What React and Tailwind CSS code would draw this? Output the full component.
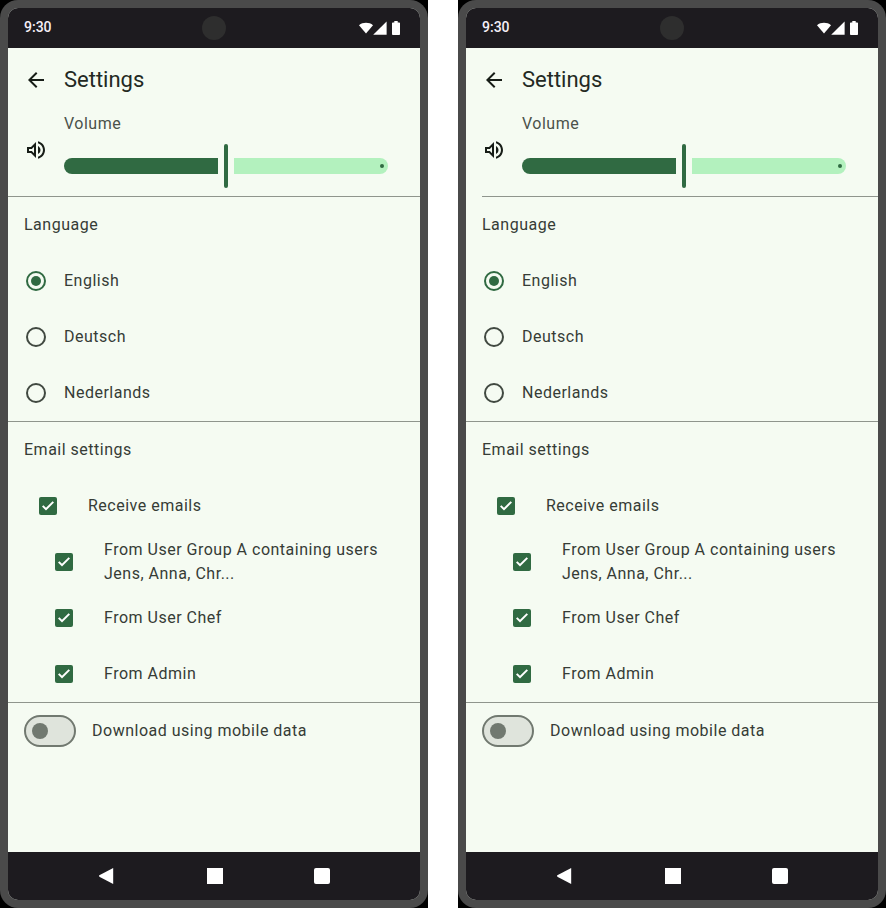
function StatusBar() {
  return (
    <div className="grid h-10 grid-cols-3 items-center bg-[#1d1b1f] pl-4 pr-5">
      <span className="pb-0.5 text-sm font-medium leading-5 tracking-normal text-[#f5eff7]">9:30</span>
      <span className="ml-[52.66px] h-6 w-6 rounded-full bg-[#2e2e2e]" />
      <svg className="h-[14px] w-[42px] justify-self-end" viewBox="0 0 42 14" fill="#fff">
        <path d="M8 12.4 1 4.2C3 2.6 5.4 1.8 8 1.8s5 .8 7 2.4z" />
        <path d="M15.2 13.7 28.6.5v13.2z" />
        <path d="M34.8 1.4H36.300V0h3.4v1.400h1.300c.6 0 1 .4 1 1V13c0 .6-.4 1-1 1h-6.200c-.5 0-.8-.4-.8-1V2.400c0-.6.3-1 .8-1z" />
      </svg>
    </div>
  );
}

function Slider() {
  return (
    <div className="flex h-11 w-[324px] items-center gap-1.5">
      <div className="h-4 w-[154px] rounded-l-full rounded-r-[1px] bg-[#306a42]" />
      <div className="h-11 w-1 rounded-full bg-[#306a42]" />
      <div className="flex h-4 w-[154px] items-center justify-end rounded-l-[1px] rounded-r-full bg-[#b3f1be] pr-1">
        <span className="h-1 w-1 rounded-full bg-[#306a42]" />
      </div>
    </div>
  );
}

function RadioRow({ label, checked }) {
  return (
    <div className="flex h-14 items-center pl-[18px]">
      <span
        className={
          checked
            ? "flex h-5 w-5 items-center justify-center rounded-full border-2 border-[#306a42]"
            : "h-5 w-5 rounded-full border-2 border-[#414941]"
        }
      >
        {checked && <span className="h-2.5 w-2.5 rounded-full bg-[#306a42]" />}
      </span>
      <span className="ml-[18px] pb-px">{label}</span>
    </div>
  );
}

function CheckRow({ label, nested }) {
  return (
    <div className={nested ? "flex h-14 items-center pl-[47px]" : "flex h-14 items-center pl-[31px]"}>
      <span className="flex h-[18px] w-[18px] shrink-0 items-center justify-center rounded-xs bg-[#306a42]">
        <svg className="h-[18px] w-[18px]" viewBox="0 0 18 18" fill="#fff">
          <path d="M7 13.6 3 9.600l1.400-1.400L7 10.800l6.600-6.600 1.400 1.400z" />
        </svg>
      </span>
      <span className="ml-[31px] w-[290px] pb-px">{label}</span>
    </div>
  );
}

function SectionTitle({ children }) {
  return <div className="flex h-14 items-center pb-px pl-4">{children}</div>;
}

function Divider({ inset }) {
  return <div className={inset ? "ml-4 h-px bg-[#8f958d]" : "h-px bg-[#8f958d]"} />;
}

function NavBar() {
  return (
    <div className="flex h-12 items-center bg-[#1d1b1f] pl-[91px]">
      <svg className="h-4 w-[15px]" viewBox="0 0 15 16" fill="#fff">
        <path d="M14.200 0v16L.8 9.100Q-1 8 .8 6.900z" />
      </svg>
      <span className="ml-[93px] h-4 w-4 bg-white" />
      <span className="ml-[91px] h-4 w-4 rounded-xs bg-white" />
    </div>
  );
}

function Phone({ insetDivider }) {
  return (
    <div className="h-[908px] w-[428px] bg-black">
      <div className="h-full rounded-[18px] bg-[#4a4a4a] p-2">
        <div className="flex h-full flex-col overflow-hidden rounded-[10px] bg-[#f5fbf2]">
          <StatusBar />
          <div className="flex h-16 items-center gap-4 pl-4">
            <svg className="h-6 w-6" viewBox="0 0 24 24" fill="#171d17">
              <path d="M20 11H7.83l5.59-5.59L12 4l-8 8 8 8 1.410-1.410L7.830 13H20z" />
            </svg>
            <h1 className="text-[22px] leading-7 tracking-normal text-[#232923]">Settings</h1>
          </div>
          <div className="flex h-[84px] gap-4 pl-4">
            <svg className="mt-[26px] h-6 w-6" viewBox="0 0 24 24" fill="#171d17">
              <path d="M3 9v6h4l5 5V4L7 9H3zm7-.17v6.340L7.830 13H5v-2h2.830L10 8.830zM16.500 12c0-1.770-1.020-3.290-2.500-4.030v8.050c1.480-.73 2.500-2.250 2.500-4.020zM14 3.230v2.060c2.890.86 5 3.540 5 6.710s-2.110 5.850-5 6.710v2.060c4.010-.91 7-4.490 7-8.770s-2.990-7.860-7-8.770z" />
            </svg>
            <div className="flex flex-col">
              <div className="h-8 text-[#4b524b]">Volume</div>
              <Slider />
            </div>
          </div>
          <Divider inset={insetDivider} />
          <SectionTitle>Language</SectionTitle>
          <RadioRow label="English" checked />
          <RadioRow label="Deutsch" />
          <RadioRow label="Nederlands" />
          <Divider />
          <SectionTitle>Email settings</SectionTitle>
          <CheckRow label="Receive emails" />
          <CheckRow label="From User Group A containing users Jens, Anna, Chr..." nested />
          <CheckRow label="From User Chef" nested />
          <CheckRow label="From Admin" nested />
          <Divider />
          <div className="flex h-14 items-center gap-4 pl-4">
            <span className="flex h-8 w-[52px] items-center rounded-full border-2 border-[#717970] bg-[#dfe4dc] pl-1.5">
              <span className="h-4 w-4 rounded-full bg-[#717970]" />
            </span>
            <span className="pb-px">Download using mobile data</span>
          </div>
          <div className="flex-1" />
          <NavBar />
        </div>
      </div>
    </div>
  );
}

export default function App() {
  return (
    <div className="flex h-[908px] w-[886px] gap-[30px] overflow-hidden bg-white font-['Roboto',sans-serif] text-base leading-6 tracking-[0.5px] text-[#363c36]">
      <Phone />
      <Phone insetDivider />
    </div>
  );
}
